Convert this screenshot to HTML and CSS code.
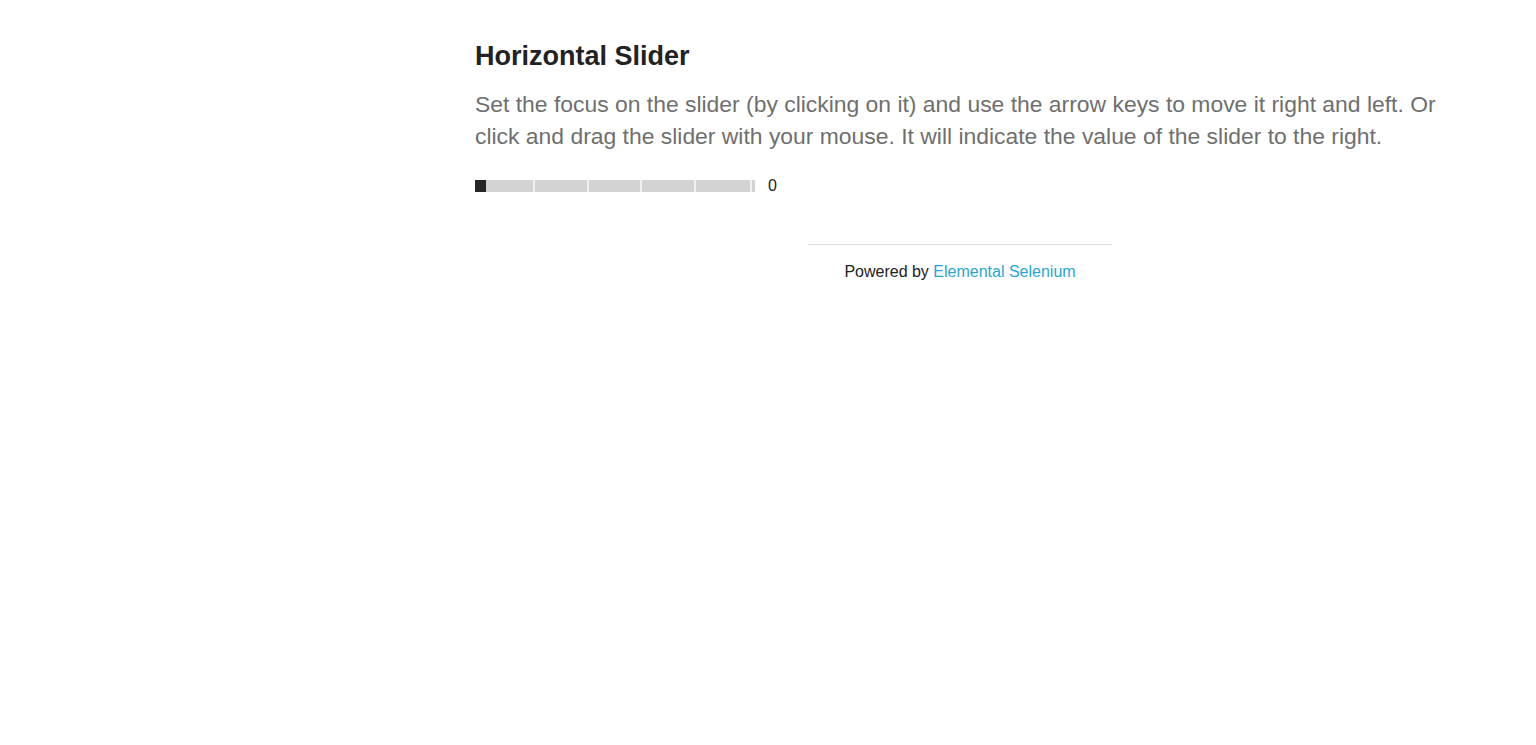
FILE: index.html
```html
<!DOCTYPE html>
<html>
<head>
<meta charset="utf-8">
<link rel="stylesheet" href="styles.css">
</head>
<body>
<div class="page">
  <div class="content">
    <h3 class="title">Horizontal Slider</h3>
    <h4 class="subheader">Set the focus on the slider (by clicking on it) and use the arrow keys to move it right and left. Or click and drag the slider with your mouse. It will indicate the value of the slider to the right.</h4>
    <div class="slider-row">
      <div class="slider">
        <div class="thumb"></div>
        <div class="seg w49"></div>
        <div class="seg w54"></div>
        <div class="seg w53"></div>
        <div class="seg w54"></div>
        <div class="seg w56"></div>
        <div class="seg end"></div>
      </div>
      <span class="value">0</span>
    </div>
    <div class="footer">
      <hr class="rule">
      <div class="powered">Powered by <a href="#">Elemental Selenium</a></div>
    </div>
  </div>
</div>
</body>
</html>
```
FILE: styles.css
```css
html, body { margin: 0; padding: 0; background: #fff; }
body { font-family: "Liberation Sans", Arial, sans-serif; color: #222; }
.page { padding-left: 475px; padding-top: 38px; }
.content { width: 970px; }
.title {
  margin: 0;
  font-size: 27px;
  line-height: 36px;
  font-weight: bold;
  color: #222;
}
.subheader {
  margin: 14px 0 0 0;
  font-size: 22.9px;
  line-height: 32px;
  font-weight: normal;
  color: #6f6f6f;
}
.slider-row {
  display: flex;
  align-items: center;
  margin-top: 27px;
  height: 14px;
}
.slider {
  display: flex;
  width: 280px;
  height: 12px;
  background: #d3d3d3;
}
.thumb { width: 11px; height: 12px; background: #262626; }
.seg { box-sizing: border-box; border-right: 2px solid #f0f0f0; }
.w49 { width: 49px; }
.w53 { width: 53px; }
.w54 { width: 54px; }
.w56 { width: 56px; }
.seg.end { width: 3px; border-right: 0; }
.value { margin-left: 13px; font-size: 16px; color: #222; }
.footer { width: 970px; margin-top: 51px; }
.rule {
  width: 304px;
  margin: 0 auto;
  margin-left: 333px;
  border: 0;
  border-top: 1px solid #ddd;
}
.powered {
  text-align: center;
  margin-top: 18px;
  font-size: 16px;
  line-height: 18px;
  color: #222;
}
.powered a { color: #2ba6cb; text-decoration: none; }
```
